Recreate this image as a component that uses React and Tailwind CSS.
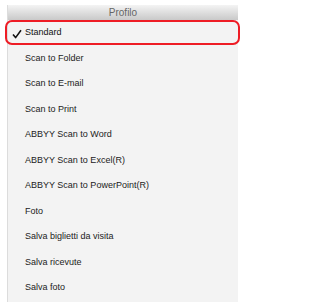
import React from 'react';

const items = [
  'Scan to Folder',
  'Scan to E-mail',
  'Scan to Print',
  'ABBYY Scan to Word',
  'ABBYY Scan to Excel(R)',
  'ABBYY Scan to PowerPoint(R)',
  'Foto',
  'Salva biglietti da visita',
  'Salva ricevute',
  'Salva foto',
];

const App = () => {
  return (
    <div
      className="relative w-[244px] h-[308px] bg-white pt-[5px] pl-[7px] overflow-hidden"
      style={{ fontFamily: '"Liberation Sans", Arial, sans-serif' }}
    >
      <div className="w-[231px] h-[297px] bg-[#f3f3f3] border-l border-[#dcdcdc] flex flex-col">
        <div className="h-[15px] flex items-center justify-center bg-gradient-to-b from-[#f4f4f4] to-[#c9c9c9] text-[10px] leading-none text-[#666]">
          Profilo
        </div>
        <div className="h-[25.5px] flex items-center pl-[17px] text-[9px] text-[#111]">
          Standard
        </div>
        {items.map((item) => (
          <div key={item} className="h-[25.5px] flex items-center pl-[17px] text-[9px] text-[#222]">
            {item}
          </div>
        ))}
      </div>

      {/* selection highlight */}
      <div className="absolute left-[5px] top-[20px] w-[235px] h-[25px] rounded-[7px] border-2 border-[#ee1c25]" />
      <svg className="absolute left-[12px] top-[29px]" width="10" height="10" viewBox="0 0 10 10">
        <path d="M1 5.5 L3.6 8.6 L9 1.2" fill="none" stroke="#111" strokeWidth="1.6" strokeLinejoin="round" />
      </svg>
    </div>
  );
};

export default App;
